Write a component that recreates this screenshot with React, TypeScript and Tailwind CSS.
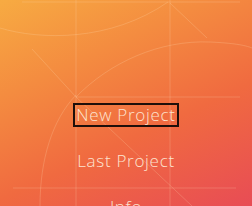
import React from "react";

export default function App() {
  const items = ["New Project", "Last Project", "Info"];
  return (
    <div className="relative w-[252px] h-[206px] overflow-hidden bg-[linear-gradient(155deg,#f7ab42_0%,#f48c40_30%,#f06a40_62%,#e84c55_100%)]">
      <svg
        className="absolute inset-0"
        width="252"
        height="206"
        viewBox="0 0 252 206"
        fill="none"
        stroke="rgba(255,222,180,0.22)"
        strokeWidth="1"
      >
        <line x1="22" y1="2" x2="240" y2="2" />
        <line x1="76" y1="97" x2="240" y2="97" />
        <line x1="13" y1="188" x2="236" y2="188" />
        <line x1="76" y1="0" x2="76" y2="206" />
        <line x1="170" y1="0" x2="170" y2="206" />
        <path d="M0 28 C40 40 110 42 168 2" />
        <path d="M76 97 C110 62 160 40 210 42 C232 43 245 45 252 48" />
        <path d="M32 49 L76 97 L192 206" />
        <path d="M170 3 L207 38" />
        <path d="M76 95 C52 120 40 160 40 206" />
      </svg>
      <div className="relative flex flex-col items-center pt-[103px] gap-[22px] font-['Open_Sans',sans-serif] font-light text-[17px] text-[#fde3cf]">
        {items.map((t, i) => (
          <div
            key={t}
            className={
              "h-[24px] leading-[20px] px-[1px] border-2 whitespace-nowrap tracking-[0.7px] " +
              (i === 0 ? "border-[#1e0f0a]" : "border-transparent")
            }
          >
            {t}
          </div>
        ))}
      </div>
    </div>
  );
}
